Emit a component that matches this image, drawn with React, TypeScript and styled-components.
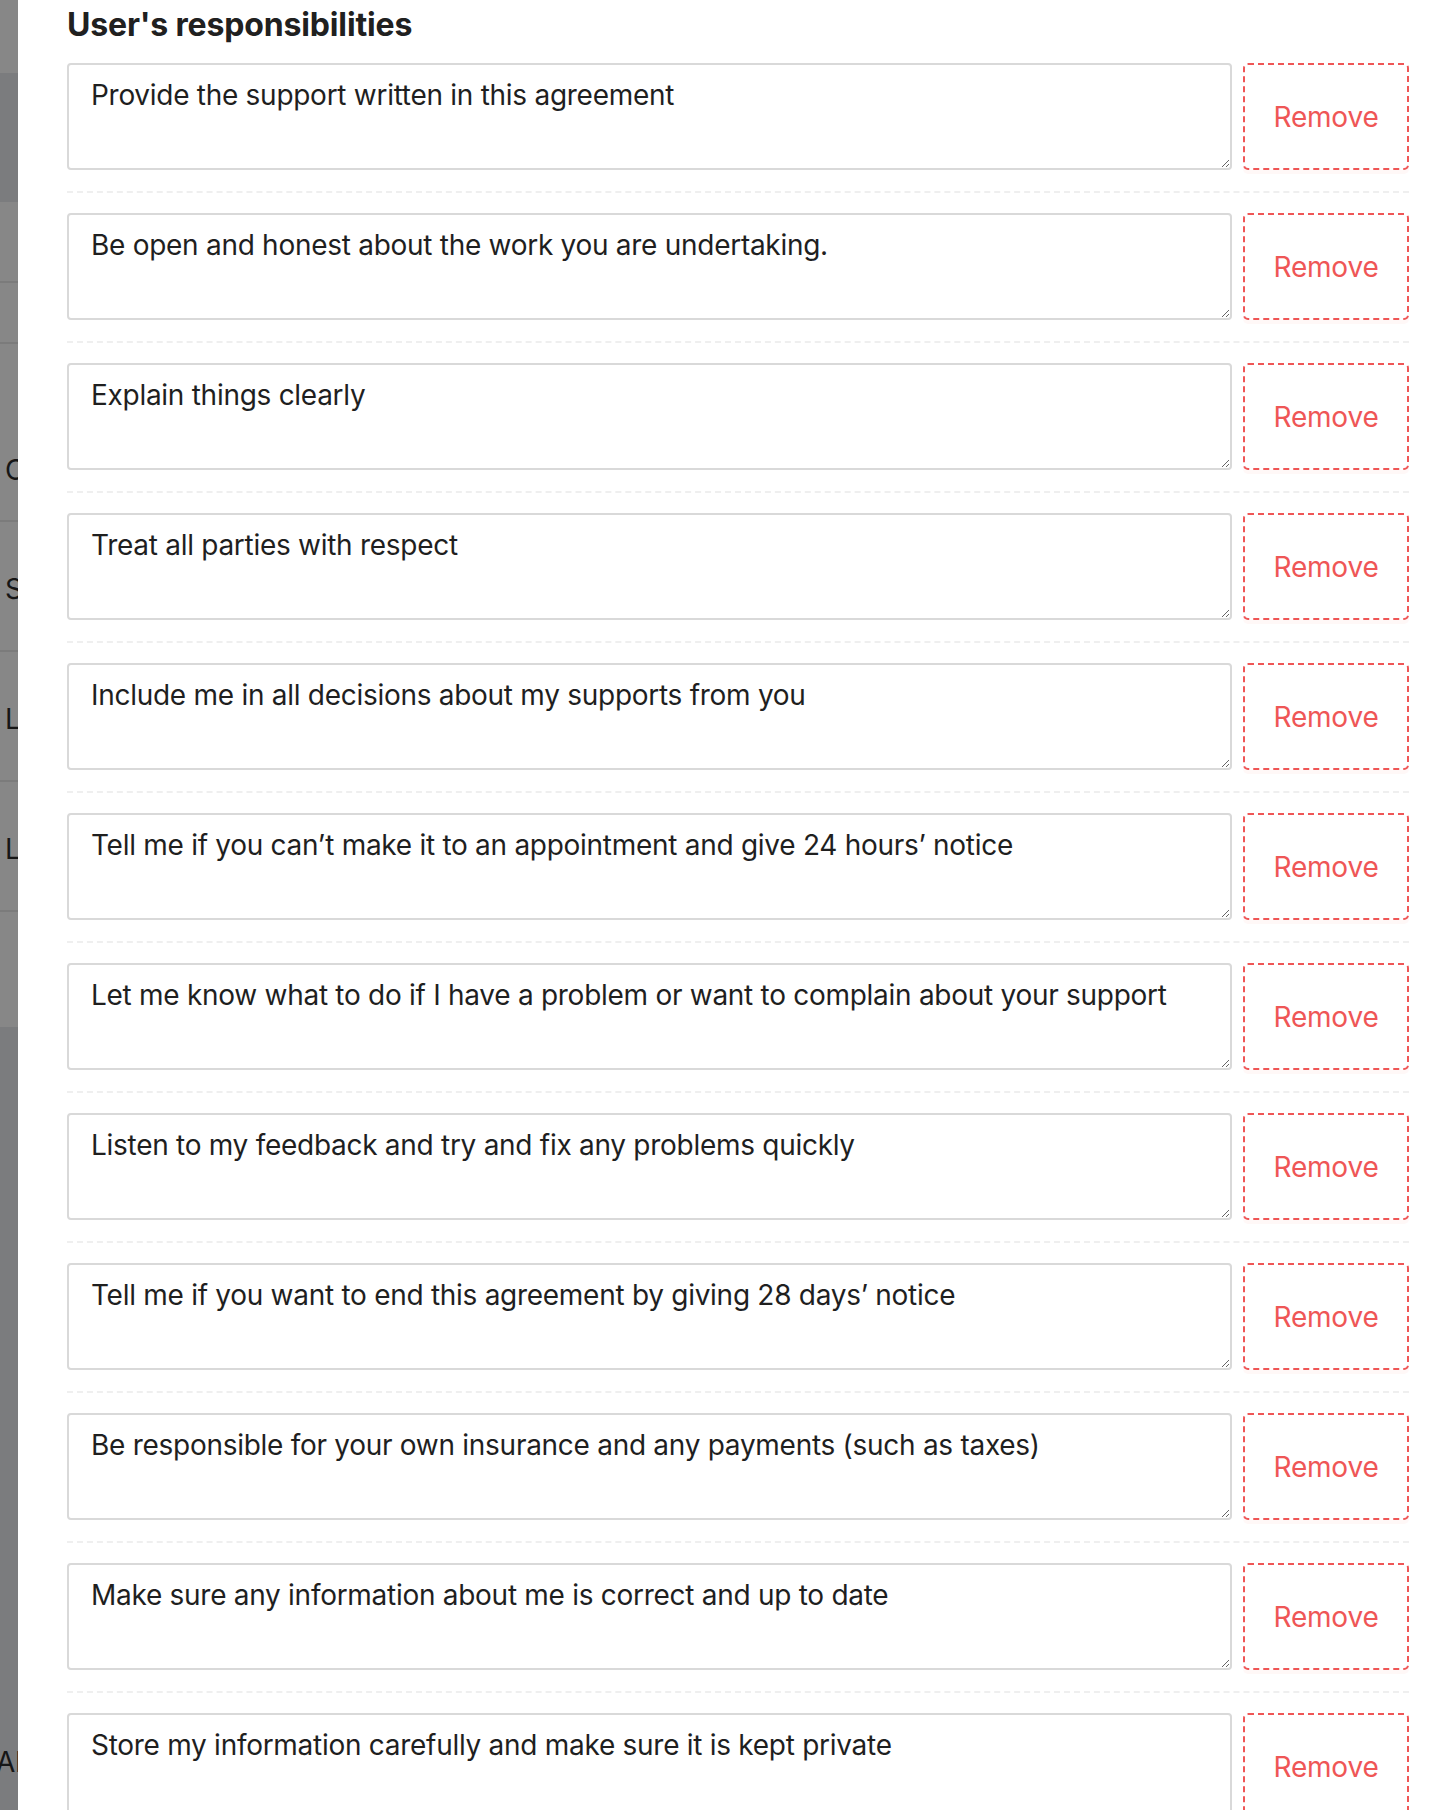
import React from "react";
import styled, { createGlobalStyle } from "styled-components";

const GlobalStyle = createGlobalStyle`
  html, body {
    margin: 0;
    padding: 0;
    background: #ffffff;
  }
  body {
    font-family: Inter, "Noto Sans", "Liberation Sans", sans-serif;
    color: #1f1f1f;
  }
  * { box-sizing: border-box; }
`;

const Shell = styled.div`
  display: flex;
  height: 100vh;
  overflow: hidden;
`;

const Sidebar = styled.aside`
  flex: 0 0 18px;
  width: 18px;
  display: flex;
  flex-direction: column;
  overflow: hidden;
  background: #878787;
`;

const SideBlock = styled.div<{
  $h?: number;
  $dark?: boolean;
  $line?: boolean;
  $grow?: boolean;
  $shift?: number;
}>`
  flex: ${(p) => (p.$grow ? "1 1 auto" : `0 0 ${p.$h}px`)};
  display: flex;
  align-items: ${(p) => (p.$grow ? "flex-end" : "center")};
  padding: ${(p) => (p.$grow ? "0 0 31px 0" : `${p.$shift ?? 6}px 0 0 5px`)};
  text-indent: ${(p) => (p.$grow ? "-4px" : "0")};
  background: ${(p) => (p.$dark ? "#7b7c7e" : "#878787")};
  border-bottom: ${(p) => (p.$line ? "2px solid #7b7b7b" : "none")};
  white-space: nowrap;
  font-size: 28px;
  color: #161616;
`;

const Main = styled.main`
  flex: 1 1 auto;
  background: #ffffff;
  padding: 1px 43px 0 49px;
  overflow: hidden;
`;

const Heading = styled.h2`
  margin: 0 0 14px;
  font-size: 32px;
  line-height: 48px;
  font-weight: 700;
  letter-spacing: -0.15px;
  color: #202020;
`;

const Row = styled.div`
  display: flex;
  gap: 11px;
  align-items: stretch;
`;

const Field = styled.textarea`
  flex: 1 1 auto;
  height: 107px;
  margin: 0;
  padding: 8px 22px;
  border: 2px solid #d9d9d9;
  border-radius: 4px;
  font-family: Inter, "Noto Sans", "Liberation Sans", sans-serif;
  font-size: 28px;
  line-height: 44px;
  letter-spacing: -0.28px;
  color: #1f1f1f;
  background: #ffffff;
  resize: vertical;
  outline: none;
`;

const RemoveButton = styled.button`
  flex: 0 0 166px;
  width: 166px;
  margin: 0;
  padding: 0;
  border: 2px dashed #ef5656;
  border-radius: 5px;
  background: #ffffff;
  box-shadow: 0 4px 0 rgba(255, 38, 5, 0.03);
  color: #ef5656;
  font-family: Inter, "Noto Sans", "Liberation Sans", sans-serif;
  font-size: 28px;
  line-height: 44px;
  letter-spacing: -0.2px;
  cursor: pointer;
`;

const Divider = styled.hr`
  margin: 21px 0 20px;
  border: 0;
  border-top: 2px dashed #efefef;
  height: 0;
`;

const items = [
  "Provide the support written in this agreement",
  "Be open and honest about the work you are undertaking.",
  "Explain things clearly",
  "Treat all parties with respect",
  "Include me in all decisions about my supports from you",
  "Tell me if you can\u2019t make it to an appointment and give 24 hours\u2019 notice",
  "Let me know what to do if I have a problem or want to complain about your support",
  "Listen to my feedback and try and fix any problems quickly",
  "Tell me if you want to end this agreement by giving 28 days\u2019 notice",
  "Be responsible for your own insurance and any payments (such as taxes)",
  "Make sure any information about me is correct and up to date",
  "Store my information carefully and make sure it is kept private",
];

export default function App() {
  return (
    <>
      <GlobalStyle />
      <Shell>
        <Sidebar>
          <SideBlock $h={73} />
          <SideBlock $h={129} $dark />
          <SideBlock $h={81} $line />
          <SideBlock $h={61} $line />
          <SideBlock $h={48} />
          <SideBlock $h={130} $line $shift={28}>Contacts</SideBlock>
          <SideBlock $h={130} $line>Services</SideBlock>
          <SideBlock $h={130} $line>Locations</SideBlock>
          <SideBlock $h={130} $line>Logs</SideBlock>
          <SideBlock $h={115} />
          <SideBlock $dark $grow>All agreements</SideBlock>
        </Sidebar>
        <Main>
          <Heading>User's responsibilities</Heading>
          {items.map((text, i) => (
            <React.Fragment key={i}>
              <Row>
                <Field defaultValue={text} rows={2} />
                <RemoveButton type="button">Remove</RemoveButton>
              </Row>
              <Divider />
            </React.Fragment>
          ))}
        </Main>
      </Shell>
    </>
  );
}
